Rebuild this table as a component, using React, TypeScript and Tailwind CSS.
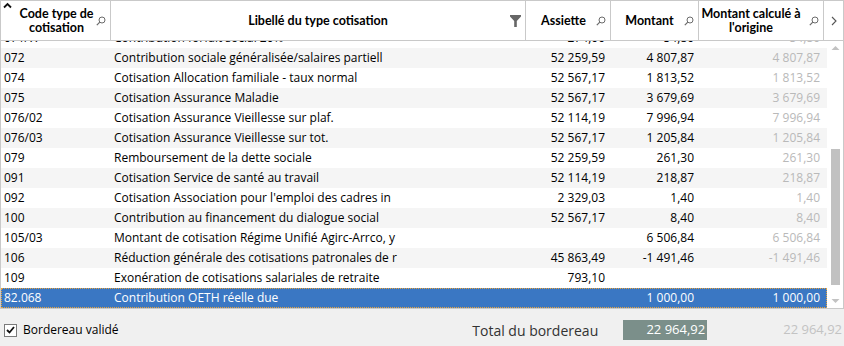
import React from "react";

type Row = {
  code: string;
  label: string;
  base: string;
  amount: string;
  origin: string;
};

const rows: Row[] = [
  { code: "072", label: "Contribution sociale généralisée/salaires partiell", base: "52 259,59", amount: "4 807,87", origin: "4 807,87" },
  { code: "074", label: "Cotisation Allocation familiale - taux normal", base: "52 567,17", amount: "1 813,52", origin: "1 813,52" },
  { code: "075", label: "Cotisation Assurance Maladie", base: "52 567,17", amount: "3 679,69", origin: "3 679,69" },
  { code: "076/02", label: "Cotisation Assurance Vieillesse sur plaf.", base: "52 114,19", amount: "7 996,94", origin: "7 996,94" },
  { code: "076/03", label: "Cotisation Assurance Vieillesse sur  tot.", base: "52 567,17", amount: "1 205,84", origin: "1 205,84" },
  { code: "079", label: "Remboursement de la dette sociale", base: "52 259,59", amount: "261,30", origin: "261,30" },
  { code: "091", label: "Cotisation Service de santé au travail", base: "52 114,19", amount: "218,87", origin: "218,87" },
  { code: "092", label: "Cotisation Association pour l'emploi des cadres in", base: "2 329,03", amount: "1,40", origin: "1,40" },
  { code: "100", label: "Contribution au financement du dialogue social", base: "52 567,17", amount: "8,40", origin: "8,40" },
  { code: "105/03", label: "Montant de cotisation Régime Unifié Agirc-Arrco, y", base: "", amount: "6 506,84", origin: "6 506,84" },
  { code: "106", label: "Réduction générale des cotisations patronales de r", base: "45 863,49", amount: "-1 491,46", origin: "-1 491,46" },
  { code: "109", label: "Exonération de cotisations salariales de retraite", base: "793,10", amount: "", origin: "" },
];

function SearchIcon() {
  return (
    <svg width="10" height="10" viewBox="0 0 10 10" className="shrink-0">
      <circle cx="6" cy="4" r="3" fill="none" stroke="#6b6b6b" strokeWidth="1" />
      <line x1="3.8" y1="6.2" x2="0.8" y2="9.2" stroke="#6b6b6b" strokeWidth="1.2" />
    </svg>
  );
}

function FilterIcon() {
  return (
    <svg width="11" height="12" viewBox="0 0 11 12" className="shrink-0">
      <path d="M0 0 H11 V1.5 L6.8 6 V12 H4.2 V6 L0 1.5 Z" fill="#666" />
    </svg>
  );
}

function HeaderCell({
  children,
  icon,
  className,
}: {
  children: React.ReactNode;
  icon: React.ReactNode;
  className: string;
}) {
  return (
    <div className={`relative flex items-center border-r border-[#c9c9c9] ${className}`}>
      <div className="flex-1 text-center text-[12.5px] font-bold leading-[14px] text-black [font-family:Lato,'Open_Sans',sans-serif]">
        {children}
      </div>
      <div className="absolute right-[4px] top-1/2 -translate-y-1/2">{icon}</div>
    </div>
  );
}

function DataRow({ row, odd }: { row: Row; odd: boolean }) {
  return (
    <div className={`flex h-[20px] items-center whitespace-nowrap ${odd ? "bg-[#f5f5f5]" : "bg-white"}`}>
      <div className="w-[110px] pl-[3px]">{row.code}</div>
      <div className="w-[415px] overflow-hidden pl-[3px]">{row.label}</div>
      <div className="w-[85px] pr-[6px] text-right">{row.base}</div>
      <div className="w-[88px] pr-[5px] text-right">{row.amount}</div>
      <div className="w-[128px] pr-[7px] text-right text-[#b9b9b9]">{row.origin}</div>
    </div>
  );
}

export default function App() {
  return (
    <div className="flex h-[346px] w-[844px] flex-col bg-[#f0f0f0] text-[12px] text-black [font-family:'Open_Sans','Noto_Sans',sans-serif]">
      <div className="relative flex h-[309px] flex-col border border-[#c9c9c9] bg-white">
        <div className="flex h-[40px] shrink-0 border-b border-[#c9c9c9]">
          <HeaderCell className="w-[110px] pl-[10px] pr-[8px]" icon={<SearchIcon />}>
            Code type de
            <br />
            cotisation
          </HeaderCell>
          <HeaderCell className="w-[415px]" icon={<FilterIcon />}>
            Libellé du type cotisation
          </HeaderCell>
          <HeaderCell className="w-[85px] pr-[9px]" icon={<SearchIcon />}>
            Assiette
          </HeaderCell>
          <HeaderCell className="w-[88px] pr-[10px]" icon={<SearchIcon />}>
            Montant
          </HeaderCell>
          <HeaderCell className="w-[125px] pr-[20px]" icon={<SearchIcon />}>
            Montant calculé à
            <br />
            l'origine
          </HeaderCell>
          <div className="flex flex-1 items-center justify-center">
            <svg width="6" height="10" viewBox="0 0 6 10">
              <path d="M1 1 L5 5 L1 9" fill="none" stroke="#555" strokeWidth="1.1" />
            </svg>
          </div>
        </div>
        {/* sort indicator */}
        <span className="pointer-events-none absolute left-[2px] top-[1px]">
          <svg width="9" height="7" viewBox="0 0 9 7">
            <path d="M1 5.5 L4.5 2 L8 5.5" fill="none" stroke="#111" strokeWidth="1.8" />
          </svg>
        </span>
        <div className="flex min-h-0 flex-1">
          <div className="flex-1 overflow-hidden">
            <div className="-mt-[13px]">
              <DataRow
                row={{ code: "071/??", label: "Contribution forfait social 20%", base: "274,00", amount: "54,80", origin: "54,80" }}
                odd={false}
              />
              {rows.map((r, i) => (
                <DataRow key={r.code} row={r} odd={i % 2 === 0} />
              ))}
              <div className="flex h-[20px] items-center whitespace-nowrap border border-dotted border-[#e8a33c] bg-[#3a77c3] text-white">
                <div className="w-[109px] pl-[2px]">82.068</div>
                <div className="w-[415px] pl-[3px]">Contribution OETH réelle due</div>
                <div className="w-[85px]" />
                <div className="w-[88px] pr-[5px] text-right">1 000,00</div>
                <div className="w-[127px] pr-[6px] text-right">1 000,00</div>
              </div>
            </div>
          </div>
          <div className="flex w-[16px] shrink-0 flex-col items-center bg-white py-[4px]">
            <svg width="9" height="6" viewBox="0 0 9 6">
              <path d="M0.5 5 L4.5 1 L8.5 5 Z" fill="#c2c2c2" />
            </svg>
            <div className="mt-[98px] h-[136px] w-[9px] bg-[#c1c1c1]" />
            <div className="flex-1" />
            <svg width="9" height="6" viewBox="0 0 9 6">
              <path d="M0.5 1 L4.5 5 L8.5 1 Z" fill="#c2c2c2" />
            </svg>
          </div>
        </div>
      </div>
      <div className="flex flex-1 items-center pr-[2px] pt-[5px]">
        <div className="ml-[4px] flex h-[13px] w-[13px] items-center justify-center border border-[#7a7a7a] bg-white">
          <svg width="9" height="8" viewBox="0 0 9 8">
            <path d="M1 4 L3.5 6.5 L8 1" fill="none" stroke="#111" strokeWidth="1.8" />
          </svg>
        </div>
        <span className="ml-[6px]">Bordereau validé</span>
        <span className="ml-auto text-[14px] text-[#333]">Total du bordereau</span>
        <div className="ml-[25px] flex h-[20px] w-[84px] items-center justify-end bg-[#7b8f8a] pr-[2px] text-[13px] text-white">
          22 964,92
        </div>
        <span className="ml-[76px] text-[13px] text-[#c3c3c3]">22 964,92</span>
      </div>
    </div>
  );
}
